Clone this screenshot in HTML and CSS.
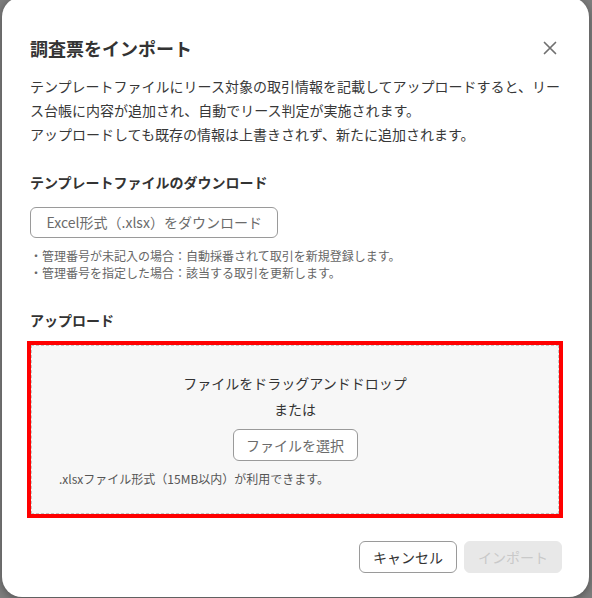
FILE: index.html
```html
<!DOCTYPE html>
<html lang="ja">
<head>
<meta charset="utf-8">
<title>調査票をインポート</title>
<link rel="stylesheet" href="styles.css">
</head>
<body>
<div class="dialog">
  <div class="header">
    <h1 class="title">調査票をインポート</h1>
    <button class="close" aria-label="閉じる">
      <svg width="14" height="14" viewBox="0 0 14 14"><path d="M1.5 1.5 L12.5 12.5 M12.5 1.5 L1.5 12.5" stroke="#707070" stroke-width="1.7" stroke-linecap="round" fill="none"/></svg>
    </button>
  </div>
  <p class="desc">テンプレートファイルにリース対象の取引情報を記載してアップロードすると、リース台帳に内容が追加され、自動でリース判定が実施されます。<br>アップロードしても既存の情報は上書きされず、新たに追加されます。</p>

  <h2 class="section-title first">テンプレートファイルのダウンロード</h2>
  <button class="btn btn-outline btn-download">Excel形式（.xlsx）をダウンロード</button>
  <ul class="notes">
    <li>・管理番号が未記入の場合：自動採番されて取引を新規登録します。</li>
    <li>・管理番号を指定した場合：該当する取引を更新します。</li>
  </ul>

  <h2 class="section-title">アップロード</h2>
  <div class="drop-highlight">
    <div class="dropzone">
      <p class="drop-text">ファイルをドラッグアンドドロップ<br>または</p>
      <button class="btn btn-outline btn-file">ファイルを選択</button>
      <p class="drop-note">.xlsxファイル形式（15MB以内）が利用できます。</p>
    </div>
  </div>

  <div class="footer">
    <button class="btn btn-outline btn-cancel">キャンセル</button>
    <button class="btn btn-disabled" disabled>インポート</button>
  </div>
</div>
</body>
</html>
```

FILE: styles.css
```css
html, body {
  margin: 0;
  padding: 0;
}
body {
  background: #7d7d7d;
  font-family: "Noto Sans CJK JP", "Noto Sans", sans-serif;
  color: #333;
  overflow: hidden;
  height: 598px;
}
.dialog {
  box-sizing: border-box;
  width: 587px;
  margin: -3px 0 0 2px;
  padding: 38px 26px 24px 28px;
  background: #fff;
  border-radius: 20px;
  box-shadow: 0 2px 8px rgba(0,0,0,0.35);
}
.header {
  display: flex;
  align-items: center;
  justify-content: space-between;
  height: 26px;
}
.title {
  margin: 0;
  font-size: 18px;
  line-height: 26px;
  font-weight: 700;
  color: #333;
}
.close {
  width: 20px;
  height: 20px;
  padding: 0;
  margin-right: 3px;
  border: none;
  background: none;
  display: flex;
  align-items: center;
  justify-content: center;
}
.desc {
  margin: 13px 0 0;
  font-size: 14px;
  line-height: 24px;
  color: #383838;
}
.section-title {
  margin: 29px 0 0;
  font-size: 14px;
  line-height: 20px;
  font-weight: 700;
  color: #333;
}
.section-title.first {
  margin-top: 26px;
}
.btn {
  font-family: "Noto Sans CJK JP", "Noto Sans", sans-serif;
  font-size: 14px;
  border-radius: 6px;
  box-sizing: border-box;
  padding: 0 14px;
  cursor: pointer;
}
.btn-outline {
  background: #fff;
  border: 1px solid #9a9a9a;
  color: #6b6b6b;
}
.btn-download {
  display: block;
  margin-top: 15px;
  height: 31px;
  line-height: 29px;
  padding: 0 15.5px;
}
.notes {
  list-style: none;
  margin: 9px 0 0;
  padding: 0;
  font-size: 12px;
  line-height: 17px;
  color: #666;
}
.drop-highlight {
  margin: 11px 0 0 -3px;
  border: 4px solid #ff0000;
}
.dropzone {
  border: 1px dashed #c4c4c4;
  background: #f7f7f7;
  padding: 24px 27px 25px;
  display: flex;
  flex-direction: column;
  align-items: center;
}
.drop-text {
  margin: 0;
  font-size: 14px;
  line-height: 26px;
  color: #333;
  text-align: center;
}
.btn-file {
  margin-top: 7px;
  height: 32px;
  width: 125px;
  padding: 0;
  line-height: 30px;
}
.drop-note {
  align-self: stretch;
  margin: 9px 0 0;
  font-size: 12px;
  line-height: 18px;
  color: #555;
}
.footer {
  display: flex;
  justify-content: flex-end;
  gap: 7px;
  margin: 23px 1px 0 0;
}
.btn-cancel,
.btn-disabled {
  width: 98px;
  height: 32px;
  padding: 0;
  line-height: 30px;
}
.btn-cancel {
  color: #333;
}
.btn-disabled {
  background: #e8e8e8;
  border: 1px solid #e8e8e8;
  color: #c9c9c9;
  cursor: default;
}
```
